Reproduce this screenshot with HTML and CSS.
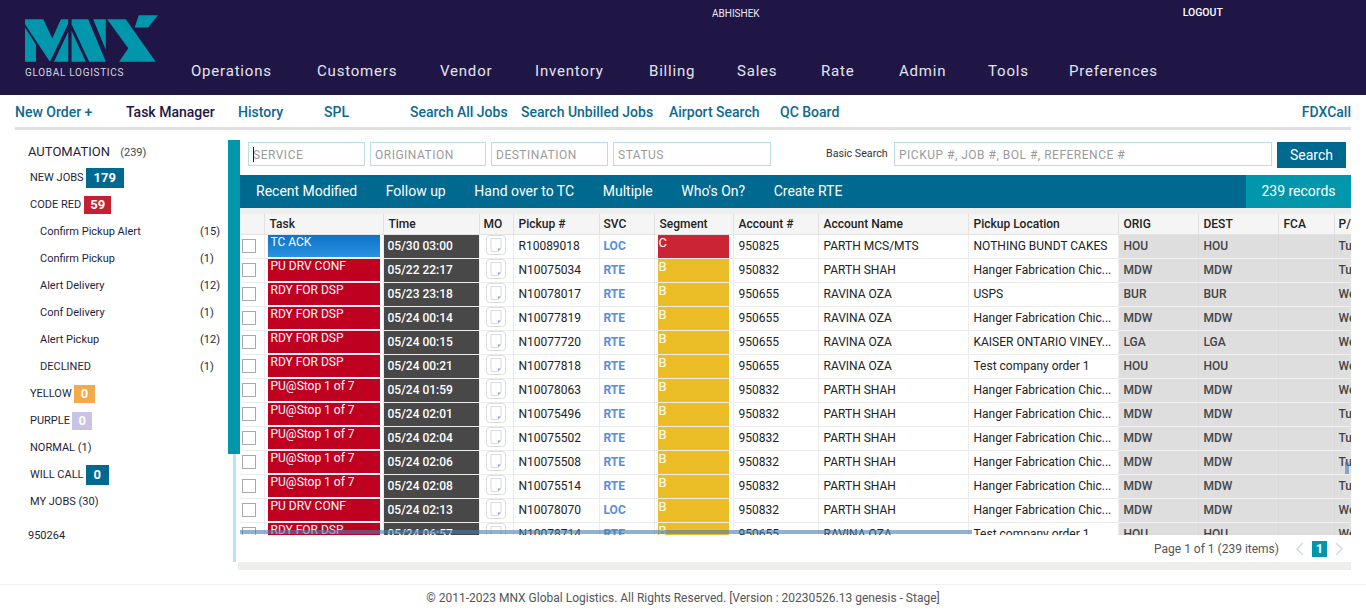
FILE: index.html
```html
<!DOCTYPE html>
<html lang="en">

<head>
    <meta charset="UTF-8" />
    <meta name="viewport" content="width=device-width, initial-scale=1.0" />
    <title>MNX Global Logistics</title>
    <link rel="stylesheet" href="styles.css">
</head>

<body>
    <svg class="defs" width="0" height="0">
        <symbol id="doc" viewBox="0 0 20 20">
            <rect x="0.5" y="0.5" width="19" height="19" rx="3" fill="#fff" stroke="#dcdcdc" />
            <path d="M5 3.500h10v10l-3 3h-7z" fill="#fff" stroke="#d3dbe3" />
            <path d="M15 13.500l-3 3v-3z" fill="#9aa8b5" />
        </symbol>
    </svg>

    <div class="header">
        <div class="brand">
            <svg class="logo" viewBox="75 45 400 140" width="133" height="47">
                <polygon fill="#0097ad" points="75,82 108,133 108,185 75,185" />
                <polygon fill="#0097ad" points="75,57 130,57 157,115 183,57 205,57 205,70 150,185 75,72" />
                <polygon fill="#0097ad" points="205,95 205,185 162,185" />
                <polygon fill="#0097ad" points="215,57 265,57 318,185 268,185 215,72" />
                <polygon fill="#0097ad" points="215,92 258,185 215,185" />
                <polygon fill="#0097ad" points="280,57 318,57 318,149" />
                <polygon fill="#0097ad" points="322,57 378,57 468,185 415,185" />
                <polygon fill="#0097ad" points="417,45 475,45 445,82 405,82" />
                <polygon fill="#0097ad" points="358,185 392,135 415,185" />
            </svg>
            <div class="brand-name">GLOBAL LOGISTICS</div>
        </div>
        <div class="header-right">
            <div class="header-top">
                <span class="user">ABHISHEK</span>
                <a class="logout">LOGOUT</a>
            </div>
            <div class="menu">
                <a>Operations</a>
                <a>Customers</a>
                <a>Vendor</a>
                <a>Inventory</a>
                <a>Billing</a>
                <a>Sales</a>
                <a>Rate</a>
                <a>Admin</a>
                <a>Tools</a>
                <a>Preferences</a>
            </div>
        </div>
    </div>

    <div class="subnav">
        <a>New Order +</a>
        <a class="dark">Task Manager</a>
        <a>History</a>
        <a>SPL</a>
        <a>Search All Jobs</a>
        <a>Search Unbilled Jobs</a>
        <a>Airport Search</a>
        <a>QC Board</a>
        <a class="last">FDXCall</a>
    </div>

    <div class="main">
        <div class="sidebar">
            <div class="side-title">AUTOMATION <span>(239)</span></div>
            <div class="side-row r-new">NEW JOBS <b class="badge b-blue">179</b></div>
            <div class="side-row r-red">CODE RED <b class="badge b-red">59</b></div>
            <div class="side-sub"><span>Confirm Pickup Alert</span><span>(15)</span></div>
            <div class="side-sub"><span>Confirm Pickup</span><span>(1)</span></div>
            <div class="side-sub"><span>Alert Delivery</span><span>(12)</span></div>
            <div class="side-sub"><span>Conf Delivery</span><span>(1)</span></div>
            <div class="side-sub"><span>Alert Pickup</span><span>(12)</span></div>
            <div class="side-sub"><span>DECLINED</span><span>(1)</span></div>
            <div class="side-row">YELLOW <b class="badge b-yellow">0</b></div>
            <div class="side-row">PURPLE <b class="badge b-purple">0</b></div>
            <div class="side-row">NORMAL (1)</div>
            <div class="side-row">WILL CALL <b class="badge b-blue">0</b></div>
            <div class="side-row">MY JOBS (30)</div>
            <div class="side-code">950264</div>
        </div>

        <div class="rail">
            <div class="rail-top"></div>
            <div class="rail-line"></div>
        </div>

        <div class="content">
            <div class="search-row">
                <div class="f-wrap">
                    <input class="f f-service" placeholder="SERVICE" />
                    <i class="caret"></i>
                </div>
                <input class="f f-orig" placeholder="ORIGINATION" />
                <input class="f f-dest" placeholder="DESTINATION" />
                <input class="f f-status" placeholder="STATUS" />
                <label class="basic-label">Basic Search</label>
                <input class="f f-basic" placeholder="PICKUP #, JOB #, BOL #, REFERENCE #" />
                <button class="search-btn">Search</button>
            </div>

            <div class="toolbar">
                <a>Recent Modified</a>
                <a>Follow up</a>
                <a>Hand over to TC</a>
                <a>Multiple</a>
                <a>Who's On?</a>
                <a>Create RTE</a>
                <div class="records">239 records</div>
            </div>

            <div class="grid-wrap">
                <table class="grid">
                    <colgroup>
                        <col class="c-check"><col class="c-task"><col class="c-time"><col class="c-mo"><col class="c-pickup"><col class="c-svc"><col class="c-seg"><col class="c-acct"><col class="c-name"><col class="c-loc"><col class="c-orig"><col class="c-dest"><col class="c-fca"><col class="c-pu">
                    </colgroup>
                    <thead>
                        <tr><th></th><th>Task</th><th>Time</th><th>MO</th><th>Pickup #</th><th>SVC</th><th>Segment</th><th>Account #</th><th>Account Name</th><th>Pickup Location</th><th>ORIG</th><th>DEST</th><th>FCA</th><th>P/</th></tr>
                    </thead>
                    <tbody>
                        <tr><td><i class="cb"></i></td><td><div class="task t-blue">TC ACK</div></td><td><div class="time">05/30 03:00</div></td><td><svg class="doc"><use href="#doc" /></svg></td><td>R10089018</td><td class="svc">LOC</td><td><div class="seg s-c">C</div></td><td>950825</td><td>PARTH MCS/MTS</td><td>NOTHING BUNDT CAKES</td><td class="grey">HOU</td><td class="grey">HOU</td><td class="grey"></td><td class="grey">Tu</td></tr>
                        <tr><td><i class="cb"></i></td><td><div class="task">PU DRV CONF</div></td><td><div class="time">05/22 22:17</div></td><td><svg class="doc"><use href="#doc" /></svg></td><td>N10075034</td><td class="svc">RTE</td><td><div class="seg">B</div></td><td>950832</td><td>PARTH SHAH</td><td>Hanger Fabrication Chic...</td><td class="grey">MDW</td><td class="grey">MDW</td><td class="grey"></td><td class="grey">Tu</td></tr>
                        <tr><td><i class="cb"></i></td><td><div class="task">RDY FOR DSP</div></td><td><div class="time">05/23 23:18</div></td><td><svg class="doc"><use href="#doc" /></svg></td><td>N10078017</td><td class="svc">RTE</td><td><div class="seg">B</div></td><td>950655</td><td>RAVINA OZA</td><td>USPS</td><td class="grey">BUR</td><td class="grey">BUR</td><td class="grey"></td><td class="grey">We</td></tr>
                        <tr><td><i class="cb"></i></td><td><div class="task">RDY FOR DSP</div></td><td><div class="time">05/24 00:14</div></td><td><svg class="doc"><use href="#doc" /></svg></td><td>N10077819</td><td class="svc">RTE</td><td><div class="seg">B</div></td><td>950655</td><td>RAVINA OZA</td><td>Hanger Fabrication Chic...</td><td class="grey">MDW</td><td class="grey">MDW</td><td class="grey"></td><td class="grey">We</td></tr>
                        <tr><td><i class="cb"></i></td><td><div class="task">RDY FOR DSP</div></td><td><div class="time">05/24 00:15</div></td><td><svg class="doc"><use href="#doc" /></svg></td><td>N10077720</td><td class="svc">RTE</td><td><div class="seg">B</div></td><td>950655</td><td>RAVINA OZA</td><td>KAISER ONTARIO VINEY...</td><td class="grey">LGA</td><td class="grey">LGA</td><td class="grey"></td><td class="grey">We</td></tr>
                        <tr><td><i class="cb"></i></td><td><div class="task">RDY FOR DSP</div></td><td><div class="time">05/24 00:21</div></td><td><svg class="doc"><use href="#doc" /></svg></td><td>N10077818</td><td class="svc">RTE</td><td><div class="seg">B</div></td><td>950655</td><td>RAVINA OZA</td><td>Test company order 1</td><td class="grey">HOU</td><td class="grey">HOU</td><td class="grey"></td><td class="grey">We</td></tr>
                        <tr><td><i class="cb"></i></td><td><div class="task">PU@Stop 1 of 7</div></td><td><div class="time">05/24 01:59</div></td><td><svg class="doc"><use href="#doc" /></svg></td><td>N10078063</td><td class="svc">RTE</td><td><div class="seg">B</div></td><td>950832</td><td>PARTH SHAH</td><td>Hanger Fabrication Chic...</td><td class="grey">MDW</td><td class="grey">MDW</td><td class="grey"></td><td class="grey">We</td></tr>
                        <tr><td><i class="cb"></i></td><td><div class="task">PU@Stop 1 of 7</div></td><td><div class="time">05/24 02:01</div></td><td><svg class="doc"><use href="#doc" /></svg></td><td>N10075496</td><td class="svc">RTE</td><td><div class="seg">B</div></td><td>950832</td><td>PARTH SHAH</td><td>Hanger Fabrication Chic...</td><td class="grey">MDW</td><td class="grey">MDW</td><td class="grey"></td><td class="grey">Tu</td></tr>
                        <tr><td><i class="cb"></i></td><td><div class="task">PU@Stop 1 of 7</div></td><td><div class="time">05/24 02:04</div></td><td><svg class="doc"><use href="#doc" /></svg></td><td>N10075502</td><td class="svc">RTE</td><td><div class="seg">B</div></td><td>950832</td><td>PARTH SHAH</td><td>Hanger Fabrication Chic...</td><td class="grey">MDW</td><td class="grey">MDW</td><td class="grey"></td><td class="grey">Tu</td></tr>
                        <tr><td><i class="cb"></i></td><td><div class="task">PU@Stop 1 of 7</div></td><td><div class="time">05/24 02:06</div></td><td><svg class="doc"><use href="#doc" /></svg></td><td>N10075508</td><td class="svc">RTE</td><td><div class="seg">B</div></td><td>950832</td><td>PARTH SHAH</td><td>Hanger Fabrication Chic...</td><td class="grey">MDW</td><td class="grey">MDW</td><td class="grey"></td><td class="grey">Tu</td></tr>
                        <tr><td><i class="cb"></i></td><td><div class="task">PU@Stop 1 of 7</div></td><td><div class="time">05/24 02:08</div></td><td><svg class="doc"><use href="#doc" /></svg></td><td>N10075514</td><td class="svc">RTE</td><td><div class="seg">B</div></td><td>950832</td><td>PARTH SHAH</td><td>Hanger Fabrication Chic...</td><td class="grey">MDW</td><td class="grey">MDW</td><td class="grey"></td><td class="grey">Tu</td></tr>
                        <tr><td><i class="cb"></i></td><td><div class="task">PU DRV CONF</div></td><td><div class="time">05/24 02:13</div></td><td><svg class="doc"><use href="#doc" /></svg></td><td>N10078070</td><td class="svc">LOC</td><td><div class="seg">B</div></td><td>950832</td><td>PARTH SHAH</td><td>Hanger Fabrication Chic...</td><td class="grey">MDW</td><td class="grey">MDW</td><td class="grey"></td><td class="grey">We</td></tr>
                        <tr><td><i class="cb"></i></td><td><div class="task">RDY FOR DSP</div></td><td><div class="time">05/24 06:57</div></td><td><svg class="doc"><use href="#doc" /></svg></td><td>N10078714</td><td class="svc">RTE</td><td><div class="seg">B</div></td><td>950655</td><td>RAVINA OZA</td><td>Test company order 1</td><td class="grey">HOU</td><td class="grey">HOU</td><td class="grey"></td><td class="grey">We</td></tr>
                    </tbody>
                </table>
                <div class="scroll-h"></div>
                <div class="scroll-v"></div>
            </div>

            <div class="pager">
                <span class="pager-text">Page 1 of 1 (239 items)</span>
                <svg class="chev" width="10" height="14" viewBox="0 0 10 14"><path d="M8 1L2 7l6 6" fill="none" stroke="#cfdcea" stroke-width="1.500" /></svg>
                <b class="page-no">1</b>
                <svg class="chev" width="10" height="14" viewBox="0 0 10 14"><path d="M2 1l6 6-6 6" fill="none" stroke="#cfdcea" stroke-width="1.500" /></svg>
            </div>
            <div class="grey-bar"></div>
        </div>
    </div>

    <div class="footer">© 2011-2023 MNX Global Logistics. All Rights Reserved. [Version : 20230526.13 genesis - Stage]</div>
</body>

</html>
```
FILE: styles.css
```css
body {
    margin: 0;
    font-family: Roboto, "Liberation Sans", sans-serif;
    color: #222;
    background: #fff;
    overflow: hidden;
}

.defs {
    display: block;
    height: 0;
}

/* header */
.header {
    display: flex;
    height: 95px;
    background-color: #1f1646;
}

.brand {
    width: 166px;
    padding: 15px 0 0 25px;
    box-sizing: content-box;
}

.logo {
    display: block;
}

.brand-name {
    margin-top: 5px;
    font-size: 10px;
    line-height: 12px;
    letter-spacing: 0.700px;
    color: #d5d5de;
}

.header-right {
    flex: 1;
}

.header-top {
    display: flex;
    height: 61px;
    padding-top: 7px;
    box-sizing: border-box;
    color: #e8e8f0;
    font-size: 10px;
    line-height: 12px;
}

.user {
    margin-left: 521px;
    padding-top: 1px;
}

.logout {
    margin-left: 423px;
    color: #fff;
    font-size: 10.500px;
    font-weight: 500;
}

.menu {
    display: flex;
    font-size: 15px;
    line-height: 20px;
    letter-spacing: 0.800px;
    color: #e4e4ec;
}

.menu a:nth-child(1) { width: 126px; }
.menu a:nth-child(2) { width: 123px; }
.menu a:nth-child(3) { width: 95px; }
.menu a:nth-child(4) { width: 114px; }
.menu a:nth-child(5) { width: 88px; }
.menu a:nth-child(6) { width: 84px; }
.menu a:nth-child(7) { width: 78px; }
.menu a:nth-child(8) { width: 89px; }
.menu a:nth-child(9) { width: 81px; }

/* second nav */
.subnav {
    display: flex;
    align-items: center;
    height: 30px;
    padding-top: 2px;
    margin: 0 15px;
    border-bottom: 3px solid #e0e0e0;
    font-size: 14px;
    font-weight: 500;
    color: #0d6a8f;
}

.subnav a:nth-child(1) { width: 111px; }
.subnav a:nth-child(2) { width: 112px; }
.subnav a:nth-child(3) { width: 86px; }
.subnav a:nth-child(4) { width: 86px; }
.subnav a:nth-child(5) { width: 111px; }
.subnav a:nth-child(6) { width: 148px; }
.subnav a:nth-child(7) { width: 111px; }

.subnav .dark {
    color: #1f1646;
}

.subnav .last {
    margin-left: auto;
}

/* sidebar */
.main {
    display: flex;
    align-items: flex-start;
    padding-top: 10px;
    height: 454px;
    box-sizing: border-box;
}

.sidebar {
    width: 228px;
    font-size: 11px;
    color: #1f1f3a;
}

.side-title {
    padding: 4px 0 0 28px;
    font-size: 13px;
    line-height: 15px;
}

.side-title span {
    margin-left: 7px;
    font-size: 11px;
    color: #444;
}

.side-row {
    display: flex;
    align-items: center;
    gap: 2px;
    height: 27px;
    padding-left: 30px;
}

.r-new {
    margin-top: 4px;
}

.badge {
    display: inline-block;
    padding: 0 7px;
    height: 18px;
    line-height: 18px;
    font-size: 13px;
    color: #fff;
    text-align: center;
}

.b-blue {
    background-color: #006990;
    height: 20px;
    line-height: 20px;
    padding: 0 8px;
}

.b-red {
    background-color: #c41f33;
    margin-left: 1px;
    padding: 0 6px;
}

.b-yellow { background-color: #f2aa4b; }
.b-purple { background-color: #cbc3e3; padding: 0 6.500px; }

.side-sub {
    display: flex;
    justify-content: space-between;
    height: 27px;
    line-height: 27px;
    padding: 0 8px 0 40px;
}

.side-sub span:last-child {
    width: 20px;
}

.side-code {
    margin-top: 14px;
    padding-left: 28px;
    line-height: 14px;
}

/* rail next to the grid */
.rail {
    display: flex;
    flex-direction: column;
    width: 12px;
    height: 422px;
}

.rail-top {
    height: 314px;
    background-color: #0097ad;
}

.rail-line {
    flex: 1;
    width: 3px;
    margin-left: 5px;
    background-color: #bde3f0;
}

/* search */
.content {
    width: 1111px;
}

.search-row {
    display: flex;
    align-items: flex-start;
    height: 35px;
    padding: 2px 0 0 8px;
    box-sizing: border-box;
}

.f-wrap {
    position: relative;
}

.caret {
    position: absolute;
    left: 5px;
    top: 5px;
    width: 1px;
    height: 15px;
    background-color: #1f1646;
}

.f {
    display: block;
    height: 24px;
    box-sizing: border-box;
    margin-right: 5px;
    padding: 2px 4px 0;
    border: 1px solid #b9dfe6;
    font-family: inherit;
    font-size: 12px;
    letter-spacing: 0.500px;
    outline: none;
}

.f::placeholder {
    color: #9b9b9b;
    opacity: 1;
}

.f-service { width: 117px; }
.f-orig { width: 116px; }
.f-dest { width: 117px; }
.f-status { width: 158px; }
.f-basic { width: 378px; }

.basic-label {
    margin-left: 50px;
    width: 68px;
    font-size: 10.700px;
    line-height: 24px;
    color: #333;
}

.search-btn {
    width: 69px;
    height: 26px;
    border: none;
    background-color: #006990;
    color: #fff;
    font-family: inherit;
    font-size: 14px;
}

.toolbar {
    display: flex;
    align-items: center;
    gap: 28.600px;
    height: 33px;
    padding-left: 16px;
    background-color: #006990;
    color: #fff;
    font-size: 14px;
}

.toolbar a {
    margin-top: -2px;
}

.records {
    margin-left: auto;
    width: 105px;
    line-height: 33px;
    text-align: center;
    background-color: #0097ad;
}

/* grid */
.grid-wrap {
    position: relative;
    height: 327px;
    padding-top: 6px;
    box-sizing: border-box;
    background-color: #eee;
    overflow: hidden;
}

.grid {
    table-layout: fixed;
    width: 1170px;
    border-collapse: collapse;
    background-color: #fff;
    font-size: 12px;
}

.c-check { width: 24px; }
.c-task { width: 119px; }
.c-time { width: 96px; }
.c-mo { width: 34px; }
.c-pickup { width: 86px; }
.c-svc { width: 55px; }
.c-seg { width: 79px; }
.c-acct { width: 85px; }
.c-name { width: 150px; }
.c-loc { width: 150px; }
.c-orig { width: 80px; }
.c-dest { width: 80px; }
.c-fca { width: 56px; }
.c-pu { width: 76px; }

.grid th {
    height: 20px;
    padding: 0 5px;
    box-sizing: border-box;
    background-color: #f5f5f5;
    border-right: 1px solid #e2e2e2;
    border-bottom: 1px solid #e2e2e2;
    font-weight: 500;
    text-align: left;
    color: #222;
}

.grid td {
    height: 24px;
    padding: 0 5px;
    box-sizing: border-box;
    border-right: 1px solid #ececec;
    border-bottom: 1px solid #ececec;
    white-space: nowrap;
    overflow: hidden;
}

.grid td:nth-child(1) {
    padding-left: 2px;
}

.grid td:nth-child(2),
.grid td:nth-child(3),
.grid td:nth-child(7) {
    padding: 0;
    vertical-align: top;
}

.grid td:nth-child(4) {
    padding: 0 0 0 6px;
    vertical-align: top;
}

.grid th:nth-child(4),
.grid th:nth-child(6),
.grid td:nth-child(6) {
    padding-left: 4px;
}

.grid td:nth-child(14),
.grid th:nth-child(14) {
    padding-left: 4px;
}

.cb {
    display: block;
    width: 12px;
    height: 12px;
    border: 1px solid #a9a9a9;
    background-color: #fff;
}

.task {
    height: 22px;
    margin: 0 3px;
    padding-left: 3px;
    background-color: #c00020;
    color: #fff;
    font-size: 12px;
    line-height: 14px;
}

.t-blue {
    background: linear-gradient(#0d74c6, #2a92e0);
}

.time {
    height: 23px;
    line-height: 23px;
    padding-left: 4px;
    background-color: #484848;
    color: #fff;
    font-size: 12px;
    font-weight: 500;
}

.doc {
    display: block;
    width: 20px;
    height: 20px;
}

.svc {
    color: #5b8ddb;
    font-weight: 700;
}

.seg {
    height: 23px;
    margin: 0 4px 0 3px;
    padding-left: 1px;
    background-color: #ebbd26;
    color: #fff;
    font-size: 13px;
    line-height: 16px;
}

.s-c {
    background-color: #cb2535;
}

.grid .grey {
    background-color: #dedede;
    border-right-color: #d8d8d8;
    border-bottom-color: #f0f0f0;
    color: #444;
    font-weight: 500;
}

.scroll-h {
    position: absolute;
    left: 0;
    bottom: 1px;
    width: 732px;
    height: 4px;
    background-color: rgba(70, 125, 175, 0.6);
}

.scroll-v {
    position: absolute;
    right: 2px;
    top: 254px;
    width: 4px;
    height: 12px;
    background-color: rgba(70, 125, 175, 0.6);
}

/* pager */
.pager {
    display: flex;
    align-items: center;
    justify-content: flex-end;
    height: 27px;
    padding-right: 7px;
    font-size: 12px;
    color: #555;
}

.pager-text {
    margin-right: 16px;
}

.page-no {
    width: 15px;
    height: 16px;
    margin: 0 7px;
    background-color: #0097ad;
    color: #fff;
    line-height: 16px;
    text-align: center;
    font-size: 13px;
}

.grey-bar {
    height: 8px;
    margin-left: -2px;
    background-color: #eeeeec;
}

/* footer */
.footer {
    border-top: 1px solid #eeeef5;
    padding-top: 6px;
    font-size: 12px;
    line-height: 15px;
    text-align: center;
    color: #555;
}
```
